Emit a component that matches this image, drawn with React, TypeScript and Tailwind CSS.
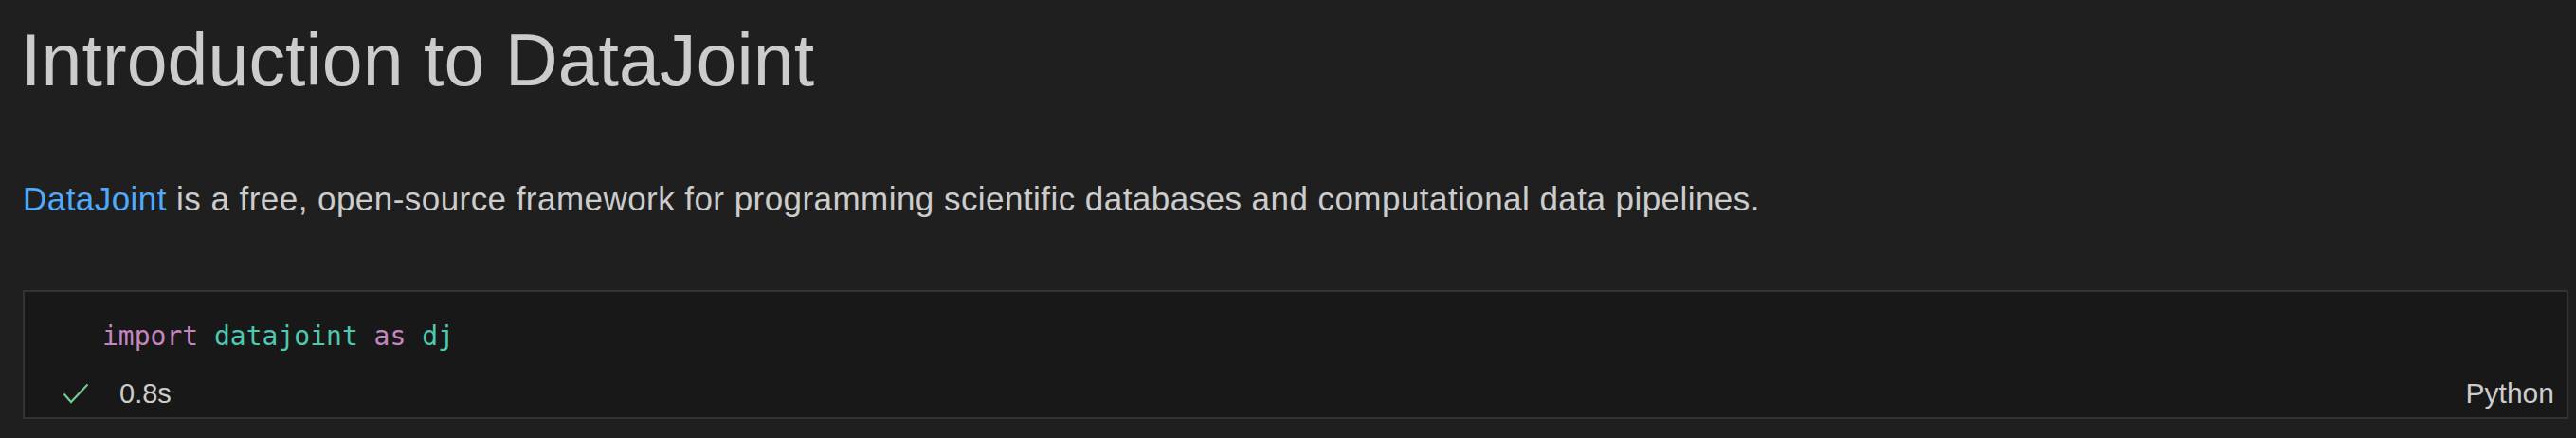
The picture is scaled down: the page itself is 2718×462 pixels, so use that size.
const sans = "font-['Liberation_Sans',Arial,sans-serif]"
const mono = "font-['DejaVu_Sans_Mono',Menlo,monospace]"

export default function App() {
  return (
    <div className={`w-full h-[462px] bg-[#1f1f1f] pl-[24px] pr-[8px] overflow-hidden ${sans}`}>
      {/* Markdown cell */}
      <h1 className="pt-[25px] -ml-[2px] text-[77px] tracking-[0.1px] leading-none font-normal text-[#cccccc]">
        Introduction to DataJoint
      </h1>
      <p className="mt-[90px] text-[35px] tracking-[0.45px] leading-none text-[#cccccc]">
        <span className="text-[#4daafc]">DataJoint</span> is a free, open-source framework for programming
        scientific databases and computational data pipelines.
      </p>

      {/* Code cell */}
      <div className="mt-[79px] border-2 border-[#333333] bg-[#181818]">
        <div className={`pt-[33px] pl-[82px] text-[28px] leading-none ${mono}`}>
          <span className="text-[#c586c0]">import</span>{' '}
          <span className="text-[#4ec9b0]">datajoint</span>{' '}
          <span className="text-[#c586c0]">as</span>{' '}
          <span className="text-[#4ec9b0]">dj</span>
        </div>
        <div className="mt-[31px] pb-[10px] pl-[40px] pr-[13px] flex items-center">
          <svg width="28" height="22" viewBox="0 0 28 22" className="shrink-0">
            <polyline points="1.5,11.5 9,20 26.5,1.5" fill="none" stroke="#73c991" strokeWidth="2.2" />
          </svg>
          <span className="ml-[32px] text-[29px] leading-none text-[#cccccc]">0.8s</span>
          <span className="ml-auto text-[30px] leading-none text-[#cccccc]">Python</span>
        </div>
      </div>
    </div>
  )
}
